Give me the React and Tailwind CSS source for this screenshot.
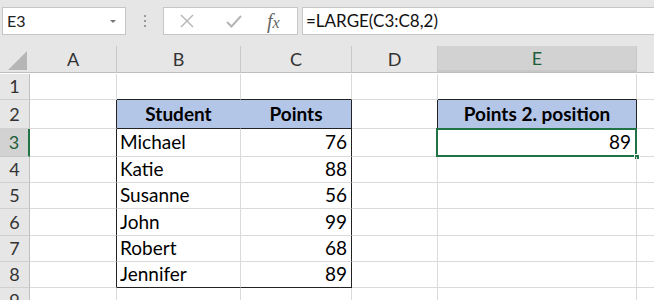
import React from 'react'

const cols = [
  { key: 'A', w: 'w-[87px]' },
  { key: 'B', w: 'w-[124px]' },
  { key: 'C', w: 'w-[111px]' },
  { key: 'D', w: 'w-[86px]' },
  { key: 'E', w: 'w-[199px]' },
  { key: 'F', w: 'flex-1' },
]

const students = [
  ['Michael', 76],
  ['Katie', 88],
  ['Susanne', 56],
  ['John', 99],
  ['Robert', 68],
  ['Jennifer', 89],
]

const rowHeights = {
  1: 'h-[26px]',
  2: 'h-[29px]',
  3: 'h-[28px]',
  4: 'h-[26px]',
  5: 'h-[26px]',
  6: 'h-[27px]',
  7: 'h-[26px]',
  8: 'h-[26px]',
  9: 'h-[26px]',
}

function Toolbar() {
  return (
    <div className="h-[46px] bg-[#e6e6e6] flex items-start pt-[7px] pl-[2px]">
      {/* name box */}
      <div className="w-[124px] h-[28px] bg-white border border-[#c6c6c6] flex items-center justify-between pl-[4px] pr-[9px]">
        <span className="text-[16px] text-[#222]">E3</span>
        <span className="w-0 h-0 border-l-[3px] border-r-[3px] border-t-[3px] border-l-transparent border-r-transparent border-t-[#777]" />
      </div>
      {/* grip dots */}
      <div className="w-[37px] h-[28px] flex flex-col items-center justify-center gap-[3px]">
        <span className="w-[2px] h-[2px] bg-[#9a9a9a]" />
        <span className="w-[2px] h-[2px] bg-[#9a9a9a]" />
        <span className="w-[2px] h-[2px] bg-[#9a9a9a]" />
      </div>
      {/* formula buttons */}
      <div className="w-[135px] h-[28px] bg-white border border-[#c6c6c6] flex items-center">
        <svg width="14" height="14" viewBox="0 0 14 14" className="ml-[16px]">
          <path d="M1 1 L13 13 M13 1 L1 13" stroke="#b5b5b5" strokeWidth="1.4" fill="none" />
        </svg>
        <svg width="16" height="14" viewBox="0 0 16 14" className="ml-[32px]">
          <path d="M1 8 L5.5 12.5 L15 2" stroke="#b5b5b5" strokeWidth="2" fill="none" />
        </svg>
        <span className="ml-[25px] text-[20px] italic text-[#666] font-['Liberation_Serif',serif] leading-none">
          f<span className="text-[16px]">x</span>
        </span>
      </div>
      {/* formula input */}
      <div className="ml-[4px] flex-1 h-[28px] bg-white border border-[#c6c6c6] border-r-0 flex items-center pl-[3px]">
        <span className="text-[17px] text-[#111]">=LARGE(C3:C8,2)</span>
      </div>
    </div>
  )
}

function ColumnHeader() {
  return (
    <div className="h-[27px] flex bg-[#e6e6e6] border-b border-[#bfbfbf]">
      <div className="w-[30px] relative">
        <svg width="30" height="27" viewBox="0 0 30 27" className="absolute left-0 top-0">
          <polygon points="8,24 27,24 27,5" fill="#b6b6b6" />
        </svg>
      </div>
      {cols.map((c) => (
        <div
          key={c.key}
          className={`${c.w} flex items-center justify-center text-[18px] ${
            c.key === 'E'
              ? 'bg-[#d2d2d2] border-b-2 border-[#217346] text-[#1e5e3a]'
              : 'text-[#333]'
          } ${c.key !== 'F' ? 'border-r border-[#c8c8c8]' : ''}`}
        >
          {c.key !== 'F' ? c.key : ''}
        </div>
      ))}
    </div>
  )
}

function Cell({ w, className = '', children }) {
  return (
    <div className={`${w} shrink-0 border-r border-b border-[#dadada] flex items-center ${className}`}>
      {children}
    </div>
  )
}

function Row({ n }) {
  const h = rowHeights[n]
  const inTable = n >= 2 && n <= 8
  const s = n >= 3 && n <= 8 ? students[n - 3] : null
  return (
    <div className={`${h} flex`}>
      <div
        className={`w-[30px] shrink-0 flex items-center justify-center text-[18px] border-b ${
          n === 3
            ? 'bg-[#d2d2d2] border-r-2 border-r-[#217346] border-b-[#c8c8c8] text-[#1e5e3a]'
            : 'bg-[#e6e6e6] border-r border-r-[#bfbfbf] border-b-[#d0d0d0] text-[#333]'
        }`}
      >
        {n}
      </div>
      {/* A */}
      <Cell w="w-[87px]" className={inTable ? '!border-r-[#222]' : ''} />
      {/* B */}
      <Cell
        w="w-[124px]"
        className={`${n === 1 || n === 2 || n === 8 ? '!border-b-[#222]' : ''} ${
          n === 2 ? 'bg-[#b4c6e7] justify-center font-bold !border-r-[#b4c6e7]' : 'pl-[3px]'
        }`}
      >
        {n === 2 ? 'Student' : s ? s[0] : ''}
      </Cell>
      {/* C */}
      <Cell
        w="w-[111px]"
        className={`${n === 1 || n === 2 || n === 8 ? '!border-b-[#222]' : ''} ${inTable ? '!border-r-[#222]' : ''} ${
          n === 2 ? 'bg-[#b4c6e7] justify-center font-bold' : 'justify-end pr-[4px]'
        }`}
      >
        {n === 2 ? 'Points' : s ? s[1] : ''}
      </Cell>
      {/* D */}
      <Cell w="w-[86px]" className={n === 2 ? '!border-r-[#222]' : ''} />
      {/* E */}
      <Cell
        w="w-[199px]"
        className={`relative ${n === 1 || n === 2 ? '!border-b-[#222]' : ''} ${n === 2 ? '!border-r-[#222] bg-[#b4c6e7] justify-center font-bold' : ''} ${
          n === 3 ? 'justify-end pr-[5px]' : ''
        }`}
      >
        {n === 2 ? 'Points 2. position' : n === 3 ? '89' : ''}
        {n === 3 && (
          <>
            <div className="absolute left-[-2px] top-[-1px] right-[-1px] bottom-[-1px] border-2 border-[#217346] pointer-events-none" />
            <div className="absolute right-[-4px] bottom-[-4px] w-[6px] h-[6px] bg-[#217346] border border-white" />
          </>
        )}
      </Cell>
      {/* F */}
      <div className="flex-1 border-b border-[#dadada]" />
    </div>
  )
}

export default function App() {
  return (
    <div className="w-[654px] h-[300px] overflow-hidden bg-white font-['Lato','Liberation_Sans',sans-serif] text-[#000]">
      <Toolbar />
      <ColumnHeader />
      <div className="text-[19px] pt-[1px]">
        {[1, 2, 3, 4, 5, 6, 7, 8, 9].map((n) => (
          <Row key={n} n={n} />
        ))}
      </div>
    </div>
  )
}
